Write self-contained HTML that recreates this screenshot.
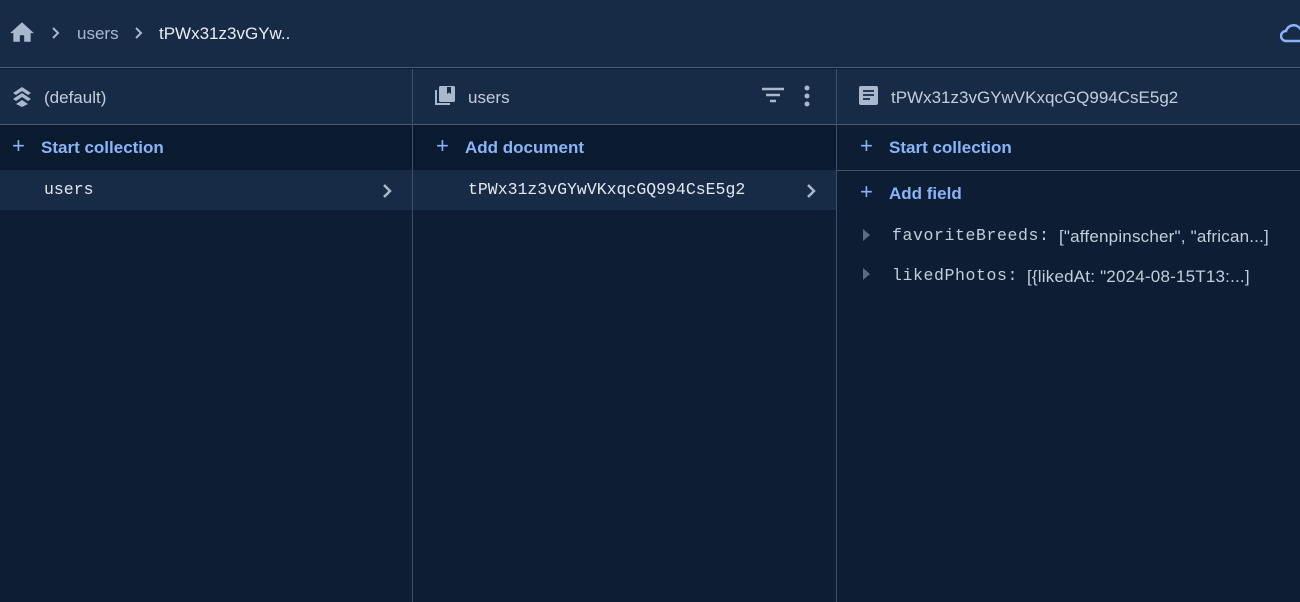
<!DOCTYPE html>
<html><head><style>
*{margin:0;padding:0;box-sizing:border-box}
body{width:1300px;height:602px;background:#0d1e34;font-family:"Liberation Sans",sans-serif;position:relative;overflow:hidden;color:#c8d2de}
.top{position:absolute;left:0;top:0;width:1300px;height:68px;background:#172a46;border-bottom:1px solid #4a5b73}
.abs{position:absolute;white-space:nowrap}
.col{position:absolute;top:69px;bottom:0;border-right:1px solid #3e4f66}
.hdr{position:absolute;left:0;right:0;top:0;height:56px;background:#172a46;border-bottom:1px solid #4a5b73}
.blue{color:#8ab4f8;font-weight:bold;font-size:17px}
.mono{font-family:"Liberation Mono",monospace;font-size:16.5px;color:#e2e8f0}
.sel{position:absolute;left:0;right:0;height:40px;background:#172a46}
.dark{position:absolute;left:0;right:0;top:56px;height:45px;background:#0b1b2f}
</style></head><body>
<div class="top">
<svg class="abs" style="left:9px;top:21px" width="26" height="22" viewBox="0 0 24 20"><path d="M12 1L1 11h3v8h6v-6h4v6h6v-8h3z" fill="#a9b8cc"/></svg>
<svg class="abs" style="left:52px;top:27px" width="8" height="12"><path d="M1 1l5 5-5 5" fill="none" stroke="#a9b8cc" stroke-width="2"/></svg>
<span class="abs" style="left:77px;top:24px;color:#a9b8cc;font-size:17px">users</span>
<svg class="abs" style="left:135px;top:27px" width="8" height="12"><path d="M1 1l5 5-5 5" fill="none" stroke="#a9b8cc" stroke-width="2"/></svg>
<span class="abs" style="left:159px;top:24px;color:#e8eef5;font-size:17px">tPWx31z3vGYw..</span>
<svg class="abs" style="left:1280px;top:24px" width="30" height="20" viewBox="0 0 30 20"><path d="M6 17a5 5 0 0 1 0-10 8 8 0 0 1 15-1 6 6 0 0 1 1 11z" fill="none" stroke="#8ab4f8" stroke-width="2.5"/></svg>
</div>

<div class="col" style="left:0;width:413px">
 <div class="hdr">
  <svg class="abs" style="left:11px;top:16px" width="22" height="22" viewBox="0 0 22 22"><path d="M2 8l9-6 9 6-3 2-6-4-6 4zM2 14l9-6 9 6-3 2-6-4-6 4zM5 19l6-4 6 4-6 3z" fill="#a9b8cc"/></svg>
  <span class="abs" style="left:44px;top:19px;font-size:17px;color:#c3cedb">(default)</span>
 </div>
 <div class="dark"></div>
 <span class="abs blue" style="left:12px;top:64px;font-weight:normal;font-size:22px">+</span>
 <span class="abs blue" style="left:41px;top:69px">Start collection</span>
 <div class="sel" style="top:101px"></div>
 <span class="abs mono" style="left:44px;top:111px">users</span>
 <svg class="abs" style="left:382px;top:114px" width="10" height="16"><path d="M2 2l6 6-6 6" fill="none" stroke="#a9b8cc" stroke-width="2.5"/></svg>
</div>

<div class="col" style="left:413px;width:424px">
 <div class="hdr">
  <svg class="abs" style="left:21px;top:16px" width="22" height="22" viewBox="0 0 22 22"><path d="M1 5v15h15v-2H3V5z" fill="#a9b8cc"/><rect x="5" y="1" width="16" height="16" rx="1.5" fill="#a9b8cc"/><path d="M13 2h4v7l-2-1.5-2 1.5z" fill="#172a46"/></svg>
  <span class="abs" style="left:55px;top:19px;font-size:17px;color:#c3cedb">users</span>
  <svg class="abs" style="left:349px;top:18px" width="22" height="18" viewBox="0 0 22 18"><path d="M0 2h22M4 8h14M8 14h6" stroke="#a9b8cc" stroke-width="2.5"/></svg>
  <svg class="abs" style="left:391px;top:16px" width="6" height="22" viewBox="0 0 6 22"><circle cx="3" cy="3" r="2.5" fill="#a9b8cc"/><circle cx="3" cy="11" r="2.5" fill="#a9b8cc"/><circle cx="3" cy="19" r="2.5" fill="#a9b8cc"/></svg>
 </div>
 <div class="dark"></div>
 <span class="abs blue" style="left:23px;top:64px;font-weight:normal;font-size:22px">+</span>
 <span class="abs blue" style="left:52px;top:69px">Add document</span>
 <div class="sel" style="top:101px"></div>
 <span class="abs mono" style="left:55px;top:111px">tPWx31z3vGYwVKxqcGQ994CsE5g2</span>
 <svg class="abs" style="left:393px;top:114px" width="10" height="16"><path d="M2 2l6 6-6 6" fill="none" stroke="#a9b8cc" stroke-width="2.5"/></svg>
</div>

<div class="col" style="left:837px;width:463px;border-right:none">
 <div class="hdr">
  <svg class="abs" style="left:22px;top:17px" width="19" height="19" viewBox="0 0 19 19"><rect width="19" height="19" rx="2" fill="#a9b8cc"/><path d="M4 5h11M4 9h11M4 13h7" stroke="#172a46" stroke-width="1.8"/></svg>
  <span class="abs" style="left:54px;top:19px;font-size:17px;color:#c3cedb">tPWx31z3vGYwVKxqcGQ994CsE5g2</span>
 </div>
 <span class="abs blue" style="left:23px;top:64px;font-weight:normal;font-size:22px">+</span>
 <span class="abs blue" style="left:52px;top:69px">Start collection</span>
 <div class="abs" style="left:0;right:0;top:101px;border-top:1px solid #3e4f66"></div>
 <span class="abs blue" style="left:23px;top:110px;font-weight:normal;font-size:22px">+</span>
 <span class="abs blue" style="left:52px;top:115px">Add field</span>
 <svg class="abs" style="left:26px;top:160px" width="8" height="12"><path d="M0 0l7 6-7 6z" fill="#5c6b80"/></svg>
 <span class="abs mono" style="left:55px;top:157px;color:#c3cedb;letter-spacing:0.6px">favoriteBreeds:</span>
 <span class="abs" style="left:222px;top:158px;font-size:17px;color:#c3cedb;letter-spacing:0.2px">["affenpinscher", "african...]</span>
 <svg class="abs" style="left:26px;top:199px" width="8" height="12"><path d="M0 0l7 6-7 6z" fill="#5c6b80"/></svg>
 <span class="abs mono" style="left:55px;top:197px;color:#c3cedb;letter-spacing:0.6px">likedPhotos:</span>
 <span class="abs" style="left:190px;top:198px;font-size:17px;color:#c3cedb;letter-spacing:0.2px">[{likedAt: "2024-08-15T13:...]</span>
</div>
</body></html>
